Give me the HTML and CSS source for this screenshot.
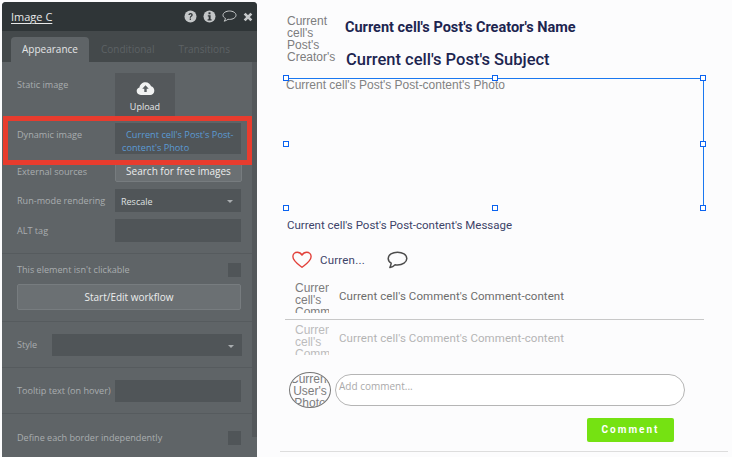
FILE: index.html
```html
<!DOCTYPE html>
<html lang="en">

<head>
  <meta charset="UTF-8">
  <title>Image C</title>
  <link rel="stylesheet" href="styles.css">
</head>

<body>
  <div class="panel">
    <div class="panel-head">
      <span class="panel-title">Image C</span>
      <div class="head-icons">
        <svg width="13" height="13" viewBox="0 0 13 13"><circle cx="6.5" cy="6.5" r="6" fill="#c4c7c8"/><path d="M4.4 5.1c0-1.3 1-2 2.2-2s2.1.7 2.1 1.8c0 1.6-1.8 1.5-1.8 2.8H5.7c0-1.9 1.7-1.9 1.7-2.8 0-.4-.3-.7-.8-.7s-.9.3-.9.9z" fill="#2f3537"/><rect x="5.7" y="8.5" width="1.3" height="1.4" fill="#2f3537"/></svg>
        <svg width="13" height="13" viewBox="0 0 13 13"><circle cx="6.5" cy="6.5" r="6" fill="#c4c7c8"/><rect x="5.5" y="2.3" width="2" height="2" fill="#2f3537"/><path d="M4.8 5.2h2.8v4h1v1.200H4.600V9.200h1.100V6.400h-.9z" fill="#2f3537"/></svg>
        <svg width="15" height="13" viewBox="0 0 15 13"><path d="M7.5 1C4 1 1 2.800 1 5.200c0 1.400 1 2.500 2.500 3.200-.2 1-.7 2-1.300 2.800 1.500-.3 3-1.200 3.800-1.900.5.1 1 .1 1.500.1 3.500 0 6.500-1.800 6.500-4.200S11 1 7.500 1z" fill="none" stroke="#c4c7c8" stroke-width="1"/></svg>
        <svg width="10" height="10" viewBox="0 0 11 11"><path d="M1.800 1.800l7.400 7.400M9.200 1.800L1.800 9.200" stroke="#c4c7c8" stroke-width="3" fill="none"/></svg>
      </div>
    </div>
    <div class="tabs">
      <span class="tab tab-active">Appearance</span>
      <span class="tab">Conditional</span>
      <span class="tab">Transitions</span>
    </div>
    <div class="panel-body">
      <div class="row row-upload">
        <span class="label">Static image</span>
        <div class="upload">
          <svg width="19" height="13" viewBox="0 0 20 14"><path d="M5 14C2.200 14 .5 12.200 .5 9.800c0-2 1.300-3.500 3-3.900C4 2.500 6.800 .3 10 .3c2.900 0 5.200 1.800 6 4.400 2 .4 3.500 2.300 3.500 4.600 0 2.700-2 4.700-4.500 4.700z" fill="#f1f2f2"/><path d="M10 3.600l3.500 3.700h-2.200v3.600H8.700V7.300H6.500z" fill="#5a5f62"/></svg>
          <span>Upload</span>
        </div>
      </div>
      <div class="row row-dynamic">
        <span class="label">Dynamic image</span>
        <div class="field dynamic-field">Current cell's Post's Post-content's Photo</div>
      </div>
      <div class="row row-search">
        <span class="label">External sources</span>
        <div class="search-btn">Search for free images</div>
      </div>
      <div class="row row-field">
        <span class="label">Run-mode rendering</span>
        <div class="field select-field">Rescale<i class="caret"></i></div>
      </div>
      <div class="row row-field">
        <span class="label">ALT tag</span>
        <div class="field"></div>
      </div>
      <div class="rule rule-first"></div>
      <div class="row row-check">
        <span class="label">This element isn't clickable</span>
        <i class="check"></i>
      </div>
      <div class="workflow-btn">Start/Edit workflow</div>
      <div class="rule rule-second"></div>
      <div class="row row-style">
        <span class="label">Style</span>
        <div class="field style-field"><i class="caret"></i></div>
      </div>
      <div class="rule rule-style"></div>
      <div class="row row-tooltip">
        <span class="label">Tooltip text (on hover)</span>
        <div class="field"></div>
      </div>
      <div class="rule rule-style"></div>
      <div class="row row-check row-border">
        <span class="label">Define each border independently</span>
        <i class="check"></i>
      </div>
    </div>
    <div class="scrollbar"></div>
    <div class="highlight"></div>
  </div>

  <div class="canvas">
    <div class="post-head">
      <div class="placeholder creator-photo">Current cell's Post's Creator's</div>
      <div class="post-titles">
        <div class="creator-name">Current cell's Post's Creator's Name</div>
        <div class="post-subject">Current cell's Post's Subject</div>
      </div>
    </div>

    <div class="photo">
      Current cell's Post's Post-content's Photo
      <i class="handle h-tl"></i><i class="handle h-tm"></i><i class="handle h-tr"></i>
      <i class="handle h-ml"></i><i class="handle h-mr"></i>
      <i class="handle h-bl"></i><i class="handle h-bm"></i><i class="handle h-br"></i>
    </div>

    <div class="message">Current cell's Post's Post-content's Message</div>

    <div class="likes">
      <svg width="20" height="18" viewBox="0 0 22 19"><path d="M11 17.500C7 14.300 1 10.500 1 5.900 1 3 3.200 1 5.800 1 8 1 9.900 2.200 11 4.200 12.100 2.200 14 1 16.200 1 18.800 1 21 3 21 5.900c0 4.600-6 8.400-10 11.600z" fill="none" stroke="#e2403a" stroke-width="1.500" stroke-linejoin="round"/></svg>
      <span class="like-count">Curren...</span>
      <svg width="21" height="18" viewBox="0 0 21 18"><path d="M10.500 1.200C5.500 1.200 1.200 3.700 1.200 7.500c0 2 1.200 3.600 3 4.700-.2 1.600-.8 3.200-1.300 4.400 2-.5 4-1.700 5.200-2.900.8.2 1.600.2 2.400.2 5 0 9.300-2.600 9.300-6.400s-4.300-6.300-9.300-6.300z" fill="none" stroke="#4c4c4c" stroke-width="1.500" stroke-linejoin="round"/></svg>
    </div>

    <div class="comment">
      <div class="placeholder comment-photo">Current cell's Comment</div>
      <span class="comment-text">Current cell's Comment's Comment-content</span>
    </div>
    <div class="comment comment-faded">
      <div class="placeholder comment-photo">Current cell's Comment</div>
      <span class="comment-text">Current cell's Comment's Comment-content</span>
    </div>

    <div class="add-row">
      <div class="placeholder user-photo">Current User's Photo</div>
      <div class="add-input">Add comment...</div>
    </div>
    <div class="submit-row">
      <div class="comment-btn">Comment</div>
    </div>
    <div class="end-rule"></div>
  </div>
</body>

</html>
```

FILE: styles.css
```css
* {
  box-sizing: border-box;
  margin: 0;
  padding: 0;
}

body {
  width: 732px;
  height: 457px;
  overflow: hidden;
  display: flex;
  background: #fcfcfd;
  font-family: 'Open Sans', sans-serif;
}

/* property editor */
.panel {
  position: relative;
  width: 255px;
  height: 455px;
  margin: 2px 0 0 2px;
  background: #5f6467;
  border-radius: 4px 4px 0 0;
  overflow: hidden;
  flex-shrink: 0;
}

.panel-head {
  display: flex;
  justify-content: space-between;
  align-items: center;
  height: 29px;
  padding: 0 4px 0 9px;
  background: #2f3537;
}

.panel-title {
  font-size: 11px;
  color: #e8e9e9;
  text-decoration: underline;
  text-underline-offset: 2px;
}

.head-icons {
  display: flex;
  align-items: center;
  gap: 6px;
}

.tabs {
  display: flex;
  height: 31px;
  padding-left: 9px;
  background: #44494b;
  align-items: flex-end;
}

.tab {
  height: 25px;
  padding: 0 12px;
  font-size: 10px;
  line-height: 25px;
  color: #5d6265;
}

.tab-active {
  width: 78px;
  padding: 0;
  text-align: center;
  background: #5f6467;
  border-radius: 4px 4px 0 0;
  color: #e4e5e6;
}

.panel-body {
  padding: 11px 16px 0 15px;
}

.row {
  display: flex;
  justify-content: space-between;
}

.label {
  font-size: 9.1px;
  line-height: 12px;
  color: #a9adaf;
}

.row-upload {
  height: 43px;
}

.row-upload .label {
  margin-top: 6px;
}

.upload {
  display: flex;
  flex-direction: column;
  align-items: center;
  width: 60px;
  margin-right: 66px;
  padding-top: 9px;
  background: #54585b;
  font-size: 9px;
  color: #e4e5e6;
}

.upload span {
  margin-top: 5px;
}

.row-dynamic {
  height: 31px;
  margin-top: 7px;
}

.row-dynamic .label {
  margin-top: 6px;
}

.field {
  position: relative;
  width: 126px;
  height: 23px;
  background: #505558;
  font-size: 9px;
  color: #dfe0e1;
}

.dynamic-field {
  height: 31px;
  padding: 5px 4px 0 7px;
  font-size: 9.2px;
  line-height: 13px;
  text-indent: 4px;
  color: #5b9bd5;
}

.row-search {
  height: 21px;
  margin-top: 7px;
}

.row-search .label {
  margin-top: 5px;
}

.search-btn {
  width: 127px;
  margin-right: -1px;
  height: 21px;
  background: #6b7073;
  border: 1px solid #777c7f;
  border-radius: 2px;
  font-size: 10px;
  line-height: 19px;
  text-align: center;
  color: #eceded;
}

.row-field {
  margin-top: 7px;
  height: 23px;
}

.row-field .label {
  margin-top: 6px;
}

.select-field {
  padding-left: 6px;
  line-height: 25px;
}

.caret {
  position: absolute;
  right: 8px;
  top: 11px;
  border-left: 3px solid transparent;
  border-right: 3px solid transparent;
  border-top: 3px solid #a9adaf;
}

.rule {
  height: 1px;
  margin: 0 -16px 0 -15px;
  background: #565b5e;
}

.rule-first {
  margin-top: 11px;
}

.row-check {
  align-items: center;
  height: 14px;
  margin-top: 9px;
}

.check {
  width: 13px;
  height: 14px;
  background: #505558;
}

.workflow-btn {
  height: 26px;
  margin-top: 7px;
  background: #6b7073;
  border: 1px solid #777c7f;
  border-radius: 2px;
  font-size: 10px;
  line-height: 24px;
  text-align: center;
  color: #eceded;
}

.rule-second {
  margin-top: 11px;
}

.row-style {
  align-items: center;
  height: 22px;
  margin: 12px -1px 0 0;
}

.style-field {
  width: 190px;
  height: 22px;
}

.rule-style {
  margin-top: 11px;
}

.row-tooltip {
  align-items: center;
  height: 22px;
  margin-top: 12px;
}

.row-tooltip .field {
  height: 22px;
}

.row-border {
  margin-top: 17px;
}

.scrollbar {
  position: absolute;
  right: 0;
  top: 60px;
  width: 5px;
  height: 375px;
  background: #54585b;
}

.highlight {
  position: absolute;
  left: 1px;
  top: 114px;
  width: 249px;
  height: 49px;
  border: 5px solid #e83c2e;
}

/* page canvas */
.canvas {
  flex: 1;
  padding: 15px 29px 0 28px;
}

.placeholder {
  font-family: 'Liberation Sans', sans-serif;
  color: #7d7d7d;
  overflow: hidden;
}

.post-head {
  display: flex;
  height: 63px;
}

.creator-photo {
  width: 50px;
  height: 52px;
  margin-left: 2px;
  font-size: 12px;
  line-height: 12px;
}

.post-titles {
  margin: 5px 0 0 8px;
  color: #1d2550;
  font-family: Roboto, sans-serif;
}

.creator-name {
  font-size: 14.5px;
  line-height: 16px;
  font-weight: 700;
}

.post-subject {
  margin: 15px 0 0 1px;
  font-size: 16.5px;
  line-height: 18px;
  font-weight: 500;
}

.photo {
  position: relative;
  width: 419px;
  height: 130px;
  border-top: 1px solid #1a78f0;
  border-right: 1px solid #1a78f0;
  padding-left: 1px;
  font-family: 'Liberation Sans', sans-serif;
  font-size: 12px;
  line-height: 13px;
  color: #828282;
}

.handle {
  position: absolute;
  width: 6px;
  height: 6px;
  background: #fff;
  border: 1px solid #0b63f0;
}

.h-tl { left: -2px; top: -4px; }
.h-tm { left: 207px; top: -4px; }
.h-tr { right: -3px; top: -4px; }
.h-ml { left: -2px; top: 62px; }
.h-mr { right: -3px; top: 62px; }
.h-bl { left: -2px; bottom: -3px; }
.h-bm { left: 207px; bottom: -3px; }
.h-br { right: -3px; bottom: -3px; }

.message {
  margin: 10px 0 0 2px;
  font-family: Roboto, sans-serif;
  font-size: 11.5px;
  line-height: 14px;
  color: #3d4368;
}

.likes {
  display: flex;
  align-items: center;
  height: 20px;
  margin: 18px 0 0 7px;
}

.like-count {
  margin: 0 22px 0 8px;
  font-family: Roboto, sans-serif;
  font-size: 11.5px;
  letter-spacing: 0.2px;
  color: #3d4368;
}

.comment {
  display: flex;
  align-items: center;
  height: 48px;
  margin-top: 2px;
  border-bottom: 1px solid #c8c8c8;
}

.comment-photo {
  width: 34px;
  height: 31px;
  margin: 3px 0 0 10px;
  font-size: 12px;
  line-height: 12px;
}

.comment-text {
  margin-left: 10px;
  font-family: Roboto, sans-serif;
  font-size: 11.5px;
  letter-spacing: 0.08px;
  color: #6c6c6c;
}

.comment-faded {
  margin-top: 0;
  height: 36px;
  border-bottom: none;
  opacity: 0.5;
}

.add-row {
  display: flex;
  align-items: center;
  height: 36px;
  margin: 16px 0 0 4px;
}

.user-photo {
  width: 42px;
  height: 36px;
  border: 1px solid #777;
  border-radius: 50%;
  font-size: 12px;
  line-height: 12px;
  text-align: center;
  flex-shrink: 0;
}

.add-input {
  width: 350px;
  height: 32px;
  margin-left: 4px;
  padding: 4px 3px;
  background: #fff;
  border: 1px solid #b5b5b5;
  border-radius: 16px;
  font-size: 10px;
  color: #aaa;
}

.submit-row {
  display: flex;
  justify-content: flex-end;
  margin: 10px 30px 0 0;
}

.comment-btn {
  width: 87px;
  height: 24px;
  background: #75e212;
  border-radius: 2px;
  font-family: Roboto, sans-serif;
  font-size: 10px;
  font-weight: 700;
  letter-spacing: 2px;
  line-height: 24px;
  text-align: center;
  color: #fff;
}

.end-rule {
  height: 1px;
  margin: 9px -24px 0 -5px;
  background: #ddd;
}
```
